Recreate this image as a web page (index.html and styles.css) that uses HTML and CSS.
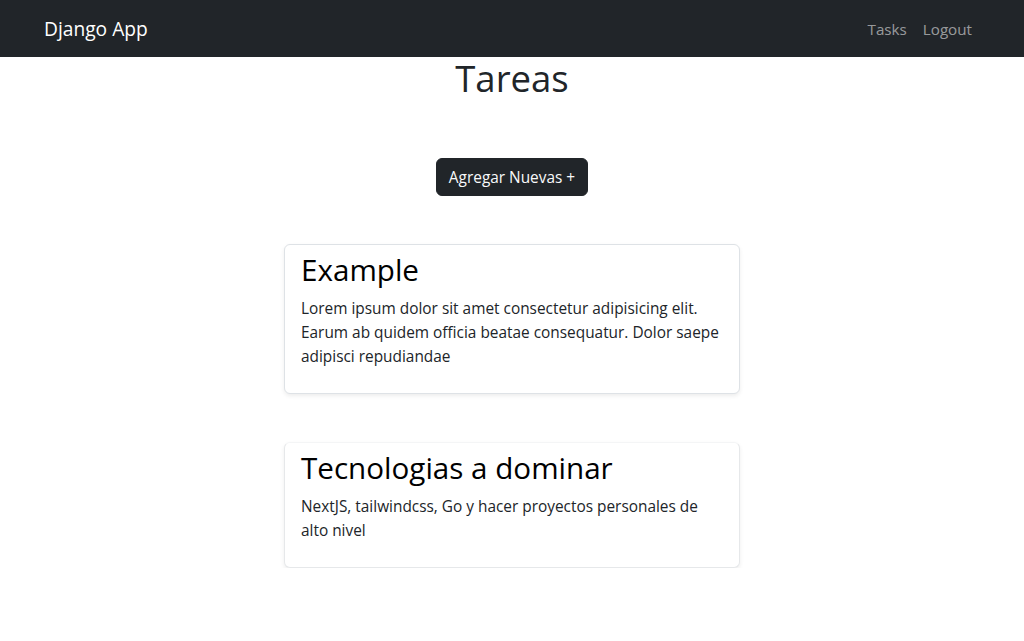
FILE: index.html
```html
<!DOCTYPE html>
<html lang="es">
<head>
<meta charset="utf-8">
<title>Django App</title>
<link rel="stylesheet" href="styles.css">
</head>
<body>
<nav class="navbar">
  <div class="container nav-inner">
    <a class="brand" href="#">Django App</a>
    <ul class="nav-links">
      <li><a href="#">Tasks</a></li>
      <li><a href="#">Logout</a></li>
    </ul>
  </div>
</nav>
<main class="container main">
  <h1 class="page-title">Tareas</h1>
  <a class="btn-dark" href="#">Agregar Nuevas +</a>
  <div class="card">
    <h2 class="card-title">Example</h2>
    <p class="card-text">Lorem ipsum dolor sit amet consectetur adipisicing elit. Earum ab quidem officia beatae consequatur. Dolor saepe adipisci repudiandae</p>
  </div>
  <div class="card card-second">
    <h2 class="card-title">Tecnologias a dominar</h2>
    <p class="card-text">NextJS, tailwindcss, Go y hacer proyectos personales de alto nivel</p>
  </div>
</main>
</body>
</html>
```
FILE: styles.css
```css
* { box-sizing: border-box; }
body {
  margin: 0;
  font-family: "Open Sans", "Noto Sans", sans-serif;
  color: #212529;
  background: #fff;
}
a { text-decoration: none; }
.container {
  max-width: 960px;
  margin: 0 auto;
  padding: 0 12px;
}
.navbar {
  background: #212529;
  height: 57px;
}
.nav-inner {
  height: 100%;
  display: flex;
  align-items: center;
  justify-content: space-between;
}
.brand {
  color: #fff;
  font-size: 19.2px;
  line-height: 30px;
}
.nav-links {
  list-style: none;
  margin: 0;
  padding: 0;
  display: flex;
}
.nav-links a {
  display: block;
  padding: 0 8px;
  color: rgba(255, 255, 255, 0.55);
  font-size: 15.2px;
  line-height: 24px;
}
.main {
  display: flex;
  flex-direction: column;
  align-items: center;
}
.page-title {
  margin: 1px 0 0;
  font-size: 36.5px;
  line-height: 41px;
  font-weight: 400;
  color: #212529;
}
.btn-dark {
  margin-top: 59px;
  height: 38px;
  padding: 0 12px;
  display: inline-flex;
  align-items: center;
  background: #212529;
  border: 1px solid #212529;
  border-radius: 6px;
  color: #f8f9fa;
  font-size: 15.4px;
}
.card {
  width: 456px;
  margin-top: 48px;
  padding: 7px 16px 24px;
  border: 1px solid #dee2e6;
  border-radius: 6px;
  box-shadow: 0 2px 4px rgba(0, 0, 0, 0.075);
  background: #fff;
}
.card-second {
  border-color: #f4f5f6 #e6e8ea #e6e8ea;
}
.card-title {
  margin: 0 0 9px;
  font-size: 29.6px;
  line-height: 36px;
  font-weight: 400;
  color: #000;
}
.card-text {
  margin: 0;
  font-size: 15.4px;
  line-height: 24px;
  color: #212529;
}
```
